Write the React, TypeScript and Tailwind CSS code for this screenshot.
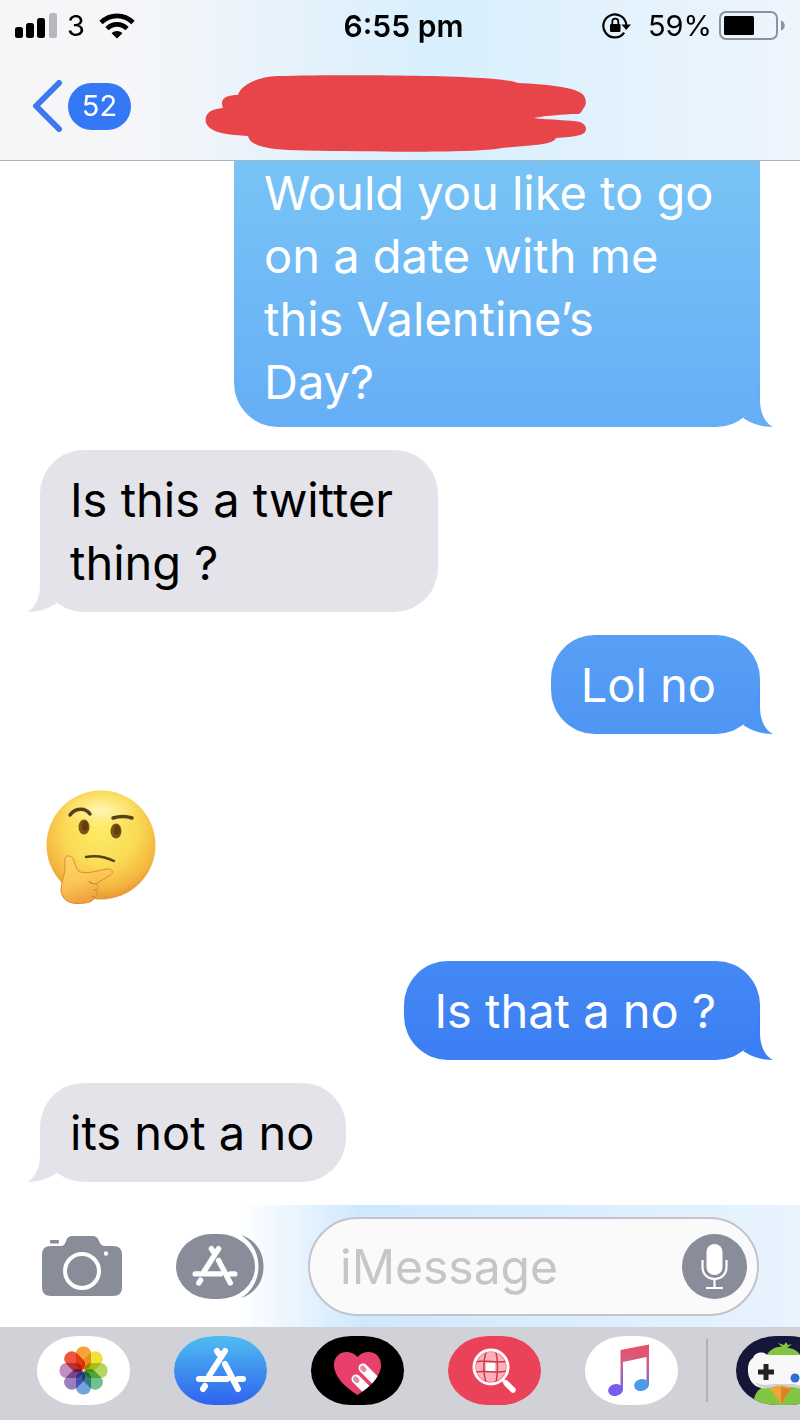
import { ReactNode } from "react";
import clsx from "clsx";

interface Message {
  id: number;
  from: "me" | "them";
  text?: string;
  emoji?: boolean;
  className?: string;
  tail?: string;
}

const MESSAGES: Message[] = [
  {
    id: 1,
    from: "me",
    text: "Would you like to go\non a date with me\nthis Valentine’s\nDay?",
    className: "w-[526px] rounded-t-none pt-0 pb-[14px] from-[#78c4f6] to-[#66aef6]",
    tail: "text-[#66aef6]",
  },
  {
    id: 2,
    from: "them",
    text: "Is this a twitter\nthing ?",
    className: "w-[398px]",
  },
  { id: 3, from: "me", text: "Lol no", className: "from-[#589ff6] to-[#4f96f4]", tail: "text-[#4f96f4]" },
  { id: 4, from: "them", emoji: true },
  { id: 5, from: "me", text: "Is that a no ?", className: "from-[#4489f5] to-[#3c7ef3]", tail: "text-[#3c7ef3]" },
  { id: 6, from: "them", text: "its not a no" },
];

const PETALS = ["#f7a23c", "#efe23a", "#b2d75c", "#6fc192", "#6fa4de", "#9a7fc0", "#c68cc0", "#f0553f"];

function SignalIcon() {
  return (
    <svg width="42" height="26" viewBox="0 0 42 26" aria-hidden="true">
      <rect x="0" y="14" width="8" height="11" rx="2.5" />
      <rect x="11" y="10" width="8" height="15" rx="2.5" />
      <rect x="22" y="5" width="8" height="20" rx="2.5" />
      <rect x="34" y="0" width="8" height="25" rx="2.5" fill="#b8b8bc" />
    </svg>
  );
}

function WifiIcon() {
  return (
    <svg width="36" height="26" viewBox="0 0 36 26" aria-hidden="true">
      <g fill="none" stroke="#000" strokeWidth="4.6">
        <path d="M2 9.5C11 0.6 25 0.6 34 9.5" />
        <path d="M8 15.6C13.6 10 22.4 10 28 15.6" />
      </g>
      <path d="M18 25.5L12.6 20.2C15.6 17.3 20.4 17.3 23.4 20.2Z" />
    </svg>
  );
}

function RotationLockIcon() {
  return (
    <svg width="30" height="28" viewBox="0 0 30 28" aria-hidden="true">
      <path d="M22.2 20.6A11.5 11.5 0 1 1 24.3 13" fill="none" stroke="#000" strokeWidth="2.2" />
      <path d="M19.5 12.5H29L24.2 18Z" />
      <rect x="8" y="12" width="10.5" height="8" rx="1.2" />
      <path d="M10.3 12V9.6a3 3 0 0 1 6 0V12" fill="none" stroke="#000" strokeWidth="1.8" />
    </svg>
  );
}

function BatteryIcon() {
  return (
    <svg width="67" height="30" viewBox="0 0 67 30" aria-hidden="true">
      <rect x="1" y="1" width="57" height="27" rx="6" fill="none" stroke="#8d9398" strokeWidth="2" />
      <rect x="5" y="5" width="30" height="19" rx="1.5" />
      <path d="M62 9.5C67 11 67 18 62 19.5Z" fill="#8d9398" />
    </svg>
  );
}

function Scribble() {
  return (
    <svg width="382" height="77" viewBox="0 0 382 77" role="img" aria-label="Contact name hidden">
      <path
        fill="#e8454a"
        d="M33 20C36 10 52 2 72 1C130 -0.5 232 0 276 3C292 4 304 5 313 8C338 9 368 12 376 18C382 22 382 30 378 34C375 40 374 39 366 39C352 40 338 41 329 43C344 45 366 45 375 47C383 50 383 58 375 60C368 62 360 62 351 63C348 70 328 70 297 73C270 78 180 77 100 75.500C70 75 45 73 43 61C26 60 6 59 1 48C-1 39 5 34 18 33C14 23 22 20 33 20Z"
      />
    </svg>
  );
}

function Tail({ side, className }: { side: "left" | "right"; className?: string }) {
  return (
    <svg
      width="43"
      height="45"
      viewBox="0 0 43 45"
      fill="currentColor"
      aria-hidden="true"
      className={clsx("absolute bottom-0", side === "right" ? "-right-[13px]" : "-left-[13px] -scale-x-100", className)}
    >
      <path d="M30 0V18C30 31 35 41 43 45C32 45 22 42 13 36C21 28 28 14 28 0Z" />
    </svg>
  );
}

function ThinkingFace() {
  return (
    <svg width="111" height="115" viewBox="0 0 111 115" role="img" aria-label="Thinking face">
      <defs>
        <radialGradient id="face" cx="0.5" cy="0.36" r="0.66">
          <stop offset="0" stopColor="#fdec66" />
          <stop offset="0.5" stopColor="#fbdb55" />
          <stop offset="0.82" stopColor="#f4b540" />
          <stop offset="1" stopColor="#e0912e" />
        </radialGradient>
        <radialGradient id="shine">
          <stop offset="0" stopColor="#fffad0" stopOpacity="0.8" />
          <stop offset="1" stopColor="#fff3a0" stopOpacity="0" />
        </radialGradient>
        <linearGradient id="hand" x1="0" y1="0" x2="0.3" y2="1">
          <stop offset="0" stopColor="#fbd867" />
          <stop offset="0.6" stopColor="#fcc555" />
          <stop offset="1" stopColor="#f0a03f" />
        </linearGradient>
      </defs>
      <circle cx="55" cy="55" r="54.500" fill="url(#face)" />
      <ellipse cx="55" cy="20" rx="42" ry="20" fill="url(#shine)" />
      <g fill="none" stroke="#55401a" strokeLinecap="round">
        <path d="M24 25C29 18 39 17 44 24" strokeWidth="3.500" />
        <path d="M67 28C74 26 80 26 86 28" strokeWidth="3.500" />
        <path d="M40 67C50 65 60 67 68 71" strokeWidth="2.500" />
      </g>
      <ellipse cx="38" cy="37" rx="5.500" ry="7.500" fill="#7b5316" />
      <ellipse cx="70" cy="41" rx="5.500" ry="7.500" fill="#7b5316" />
      <ellipse cx="39" cy="36" rx="3" ry="5" fill="#5f3f12" />
      <ellipse cx="71" cy="40" rx="3" ry="5" fill="#5f3f12" />
      <path
        d="M19 68C21 64 27 66 28 71C30 77 31 81 34 82C45 84 52 80 61 79C66 78 69 83 63 86C57 90 52 92 50 94C53 96 52 99 50 100C52 103 51 106 48 108C47 112 42 113 33 113.500C21 114 15 108 15 99C16 91 18 86 19 79Z"
        fill="url(#hand)"
        stroke="#d98c32"
        strokeWidth="1"
      />
      <path d="M50 94C46 94 44 93 43 91M50 100L47 100M48 107L46 106" fill="none" stroke="#c97e2b" strokeWidth="1.200" />
    </svg>
  );
}

function CameraIcon() {
  return (
    <svg width="80" height="61" viewBox="0 0 80 61" aria-hidden="true">
      <path
        fill="#898c99"
        d="M9 10H18C22 10 23 8 24 5C25 2 27 0 31 0H50C54 0 56 2 57 5C58 8 60 10 63 10H71C77 10 80 13 80 19V51C80 57 77 60 71 60H9C3 60 0 57 0 51V19C0 13 3 10 9 10Z"
      />
      <rect x="8" y="4" width="9" height="3.500" rx="1" fill="#898c99" />
      <circle cx="40" cy="35" r="17" fill="none" stroke="#fff" strokeWidth="4" />
      <circle cx="64" cy="17.500" r="2.200" fill="#fff" />
    </svg>
  );
}

function AppStoreGlyph() {
  return (
    <g fill="none" stroke="#fff" strokeWidth="6" strokeLinecap="round">
      <path d="M29 3L13 28" />
      <path d="M21 3L23 6" />
      <path d="M3 31H31" />
      <path d="M29 16L42 41" />
      <path d="M42 31H47" />
      <path d="M9 38L7 41" />
    </g>
  );
}

function AppsIcon() {
  return (
    <svg width="88" height="65" viewBox="0 0 88 65" aria-hidden="true">
      <rect width="79" height="65" rx="36" fill="#898c99" />
      <path fill="#898c99" d="M65 1C80 6 87.500 18 87.500 32.500S80 59 65 64C76 57 82.500 46 82.500 32.500S76 8 65 1Z" />
      <g transform="translate(16.500 12) scale(0.900)">
        <AppStoreGlyph />
      </g>
    </svg>
  );
}

function MicIcon() {
  return (
    <svg width="65" height="65" viewBox="0 0 65 65" aria-hidden="true">
      <circle cx="32.500" cy="32.500" r="32.500" fill="#898c99" />
      <rect x="24.500" y="10" width="16" height="31" rx="8" fill="#fff" />
      <path d="M20.500 26V33C20.500 49 44.500 49 44.500 33V26M32.500 45V54M24 54H41" fill="none" stroke="#fff" strokeWidth="2.200" />
    </svg>
  );
}

function PhotosArt() {
  return (
    <g transform="translate(46.500 34.500)">
      {PETALS.map((color, i) => (
        <rect
          key={color}
          x="-7.500"
          y="-24"
          width="15"
          height="23"
          rx="7"
          fill={color}
          transform={`rotate(${i * 45})`}
          className="mix-blend-multiply"
        />
      ))}
    </g>
  );
}

function StoreArt() {
  return (
    <>
      <defs>
        <linearGradient id="store" x1="0" y1="0" x2="0" y2="1">
          <stop offset="0" stopColor="#4fbdf0" />
          <stop offset="1" stopColor="#2f62ee" />
        </linearGradient>
      </defs>
      <rect width="93" height="69" fill="url(#store)" />
      <g transform="translate(22 12)">
        <AppStoreGlyph />
      </g>
    </>
  );
}

const HEART = "M46.500 59C37 53 23 42 23 29C23 15 39 12 46.500 21C54 12 70 15 70 29C70 42 56 53 46.500 59Z";

function HeartArt() {
  return (
    <>
      <clipPath id="heart">
        <path d={HEART} />
      </clipPath>
      <rect width="93" height="69" fill="#000" />
      <path d={HEART} fill="#e83f6d" />
      <g clipPath="url(#heart)" strokeLinecap="round">
        <path d="M52 32L72 52M45 43L65 63" stroke="#fff" strokeWidth="9" />
        <path d="M51.500 32L53 33.500M44.500 43L46 44.500" stroke="#d990a6" strokeWidth="5" />
      </g>
    </>
  );
}

function SearchArt() {
  return (
    <>
      <rect width="93" height="69" fill="#ea4359" />
      <circle cx="43" cy="31" r="15" fill="#ffb0b9" />
      <rect x="38" y="27" width="9" height="8" fill="#fff" />
      <path
        d="M38 16C35 26 35 36 38 47M48 16C50 26 50 36 48 47M28 26C38 23 48 28 59 25M28 36C38 34 48 38 59 35"
        fill="none"
        stroke="#c83b50"
        strokeWidth="1.500"
      />
      <circle cx="43" cy="31" r="17" fill="none" stroke="#fff" strokeWidth="3" />
      <path d="M54 43L59 48" stroke="#fff" strokeWidth="3" />
      <path d="M58 47L65 54" stroke="#fff" strokeWidth="5.500" strokeLinecap="round" />
    </>
  );
}

function MusicArt() {
  return (
    <>
      <defs>
        <linearGradient id="stem" gradientUnits="userSpaceOnUse" x1="0" y1="10" x2="0" y2="58">
          <stop offset="0" stopColor="#ee4e62" />
          <stop offset="0.4" stopColor="#c9628f" />
          <stop offset="1" stopColor="#5a6fe8" />
        </linearGradient>
      </defs>
      <path d="M35.500 14L64 8.500V49H61.500V21L38 26V54H35.500Z" fill="url(#stem)" />
      <ellipse cx="30.500" cy="54" rx="7.500" ry="6" fill="#7a5cf0" transform="rotate(-12 30.500 54)" />
      <ellipse cx="56.500" cy="49" rx="7.500" ry="6" fill="#4d9aec" transform="rotate(-12 56.500 49)" />
    </>
  );
}

function GamePigeonArt() {
  return (
    <>
      <rect width="93" height="69" fill="#15173a" />
      <path d="M17 69C18 55 24 48 46 48S78 52 93 69Z" fill="#83c441" />
      <path d="M28 24C32 14 40 10 46 11L42 7L48 9L50 6L52 9L56 8L51 12C60 12 65 18 68 26Z" fill="#83c441" />
      <path d="M17 22C19 16 28 15 31 19H75C90 20 90 52 74 53C66 54 63 50 56 50H38C31 51 30 54 22 51C9 46 10 25 17 22Z" fill="#f7f7f8" />
      <path d="M19 46C28 51 34 48 38 48H58C66 50 70 51 78 49C70 56 62 52 56 51H38C30 53 24 53 19 46Z" fill="#cfd1d6" />
      <path d="M27.500 28H32.500V33.500H38V38.500H32.500V44H27.500V38.500H22V33.500H27.500Z" fill="#222" />
      <circle cx="59" cy="42" r="4.500" fill="#2d6fd0" />
      <path d="M34 53C38 49 50 48 55 53L45 68Z" fill="#f1a43a" />
      <path d="M45 51L55 53L45 68Z" fill="#d9842a" />
    </>
  );
}

function AppPill({ label, children }: { label: string; children: ReactNode }) {
  return (
    <button type="button" aria-label={label} className="h-[69px] w-[93px] shrink-0 overflow-hidden rounded-[40px/34px] bg-white">
      <svg width="93" height="69" viewBox="0 0 93 69" aria-hidden="true">
        {children}
      </svg>
    </button>
  );
}

function Bubble({ message }: { message: Message }) {
  const mine = message.from === "me";

  if (message.emoji) {
    return (
      <div className="self-start py-[33px] pl-[6px]">
        <ThinkingFace />
      </div>
    );
  }

  return (
    <div
      className={clsx(
        "relative rounded-[44px] pl-[30px] text-[47px] leading-[63px] whitespace-pre",
        mine ? "self-end bg-linear-to-b pr-[44px] text-white" : "self-start bg-[#e4e3e9] pr-[32px] text-black",
        !message.className?.includes("pt-0") && "py-[18px]",
        message.className
      )}
    >
      {message.text}
      <Tail side={mine ? "right" : "left"} className={mine ? message.tail : "text-[#e4e3e9]"} />
    </div>
  );
}

export default function App() {
  return (
    <div className="flex min-h-screen flex-col overflow-hidden bg-white font-['Inter','Liberation_Sans',sans-serif]">
      {/* Status bar + navigation */}
      <header className="border-b border-[#a9b4ba] bg-linear-to-r from-[#f6f6f9] from-15% via-[#d8effd] via-55% to-[#eef5fd]">
        <div className="grid h-[52px] grid-cols-[1fr_auto_1fr] items-center pr-[14px] pl-[15px] text-[29px]">
          <div className="flex items-center">
            <SignalIcon />
            <span className="mr-[14px] ml-[10px]">3</span>
            <WifiIcon />
          </div>
          <time className="pl-[6px] text-[30px] font-semibold">6:55 pm</time>
          <div className="flex items-center justify-end">
            <RotationLockIcon />
            <span className="mr-[7px] ml-[16px]">59%</span>
            <BatteryIcon />
          </div>
        </div>
        <nav className="grid h-[108px] grid-cols-[1fr_auto_1fr] items-center pr-[40px] pl-[32px]">
          <button type="button" aria-label="Back, 52 unread" className="flex items-center gap-[5px]">
            <svg width="31" height="52" viewBox="0 0 31 52" fill="none" aria-hidden="true">
              <path d="M27 3L4 26L27 49" stroke="#3c78ee" strokeWidth="6" strokeLinecap="round" strokeLinejoin="round" />
            </svg>
            <span className="flex h-[47px] w-[63px] items-center justify-center rounded-full bg-[#3478f6] text-[29px] text-white">
              52
            </span>
          </button>
          <h1 className="pt-[14px]">
            <Scribble />
          </h1>
        </nav>
      </header>

      {/* Conversation */}
      <main className="flex flex-1 flex-col gap-[23px] px-[40px] pb-[23px]">
        {MESSAGES.map((message) => (
          <Bubble key={message.id} message={message} />
        ))}
      </main>

      {/* Composer */}
      <footer>
        <form
          className="flex items-center bg-linear-to-r from-white from-30% via-[#cfe8fe] via-45% to-[#e8f4fe] pt-[12px] pr-[41px] pb-[11px] pl-[42px]"
          onSubmit={(e) => e.preventDefault()}
        >
          <button type="button" aria-label="Camera">
            <CameraIcon />
          </button>
          <button type="button" aria-label="Apps" className="mr-[44px] ml-[54px]">
            <AppsIcon />
          </button>
          <div className="flex h-[99px] min-w-0 flex-1 items-center rounded-full border-2 border-[#c3c4ca] bg-[#fafafb] pr-[10px] pl-[30px]">
            <input
              type="text"
              aria-label="Message"
              placeholder="iMessage"
              className="min-w-0 flex-1 bg-transparent text-[48px] leading-[63px] outline-none placeholder:text-[#c5c5ca]"
            />
            <button type="button" aria-label="Record audio">
              <MicIcon />
            </button>
          </div>
        </form>

        {/* App drawer */}
        <div className="flex items-center gap-[44px] overflow-hidden bg-[#d1d2d8] pt-[9px] pb-[15px] pl-[37px]">
          <AppPill label="Photos">
            <PhotosArt />
          </AppPill>
          <AppPill label="App Store">
            <StoreArt />
          </AppPill>
          <AppPill label="Digital Touch">
            <HeartArt />
          </AppPill>
          <AppPill label="Images">
            <SearchArt />
          </AppPill>
          <AppPill label="Music">
            <MusicArt />
          </AppPill>
          <div className="-ml-[16px] flex items-center gap-[28px]">
            <div className="h-[63px] w-[2px] bg-[#b0b1b7]" />
            <AppPill label="GamePigeon">
              <GamePigeonArt />
            </AppPill>
          </div>
        </div>
      </footer>
    </div>
  );
}
